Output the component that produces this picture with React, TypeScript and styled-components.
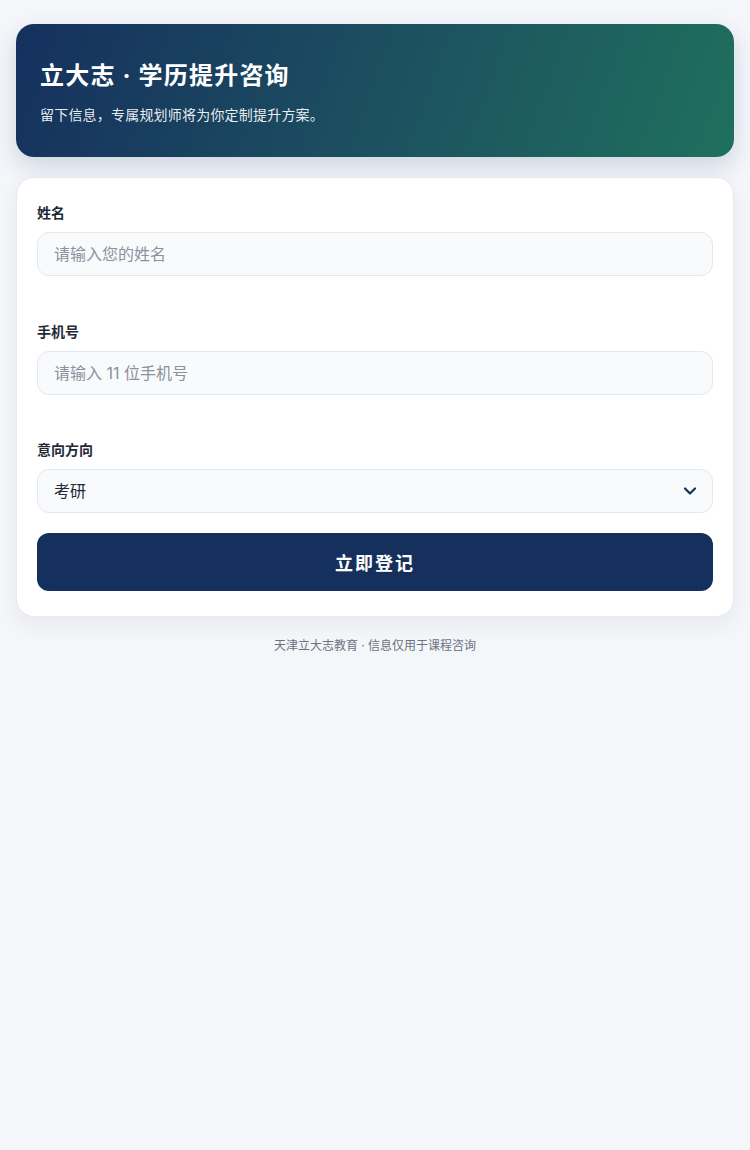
import { useState } from "react";
import styled, { createGlobalStyle } from "styled-components";

const GlobalStyle = createGlobalStyle`
  * {
    box-sizing: border-box;
  }
  body {
    margin: 0;
    background: #f4f6fa;
    font-family: Inter, "Noto Sans CJK SC", sans-serif;
    color: #1f2937;
  }
`;

const Page = styled.div`
  padding: 24px 16px 40px;
  display: flex;
  flex-direction: column;
  gap: 20px;
`;

const Hero = styled.header`
  border-radius: 18px;
  padding: 35px 24px 32px;
  background: linear-gradient(110deg, #15305e 0%, #1c4f60 50%, #1f705d 100%);
  color: #ffffff;
  box-shadow: 0 10px 24px rgba(21, 48, 94, 0.16);
`;

const Title = styled.h1`
  margin: 0 0 11px;
  font-size: 24px;
  line-height: 34px;
  font-weight: 700;
  letter-spacing: 1.2px;
`;

const Subtitle = styled.p`
  margin: 0;
  font-size: 14px;
  line-height: 21px;
  letter-spacing: 0.2px;
  color: rgba(255, 255, 255, 0.92);
`;

const Card = styled.form`
  background: #ffffff;
  border: 1px solid #e5e9f0;
  border-radius: 18px;
  padding: 25px 20px 25px;
  box-shadow: 0 8px 22px rgba(30, 41, 59, 0.06);
  display: flex;
  flex-direction: column;
`;

const Field = styled.div<{ $space: number }>`
  display: flex;
  flex-direction: column;
  gap: 9px;
  margin-bottom: ${(p) => p.$space}px;
`;

const Label = styled.label`
  font-size: 14px;
  line-height: 20px;
  font-weight: 700;
  color: #1f2937;
`;

const Input = styled.input`
  height: 44px;
  width: 100%;
  border: 1px solid #e2e8f0;
  border-radius: 12px;
  background: #f8fafc;
  padding: 0 16px;
  font-family: inherit;
  font-size: 16px;
  color: #1f2937;
  outline: none;

  &::placeholder {
    color: #8b929c;
  }
`;

const SelectWrap = styled.div`
  position: relative;
`;

const Select = styled.select`
  appearance: none;
  height: 44px;
  width: 100%;
  border: 1px solid #e2e8f0;
  border-radius: 12px;
  background: #f8fafc;
  padding: 0 40px 0 16px;
  font-family: inherit;
  font-size: 16px;
  color: #1f2937;
  outline: none;
`;

const Chevron = styled.svg`
  position: absolute;
  right: 16px;
  top: 50%;
  transform: translateY(-50%);
  pointer-events: none;
`;

const Submit = styled.button`
  height: 58px;
  border: none;
  border-radius: 12px;
  background: #15305c;
  color: #ffffff;
  font-family: inherit;
  font-size: 18px;
  font-weight: 700;
  letter-spacing: 2px;
  cursor: pointer;
`;

const Footer = styled.p`
  margin: 0;
  text-align: center;
  font-size: 12px;
  line-height: 18px;
  color: #6b7280;
`;

function App() {
  const [name, setName] = useState("");
  const [phone, setPhone] = useState("");
  const [track, setTrack] = useState("考研");

  return (
    <>
      <GlobalStyle />
      <Page>
        <Hero>
          <Title>立大志 · 学历提升咨询</Title>
          <Subtitle>留下信息，专属规划师将为你定制提升方案。</Subtitle>
        </Hero>

        <Card onSubmit={(e) => e.preventDefault()}>
          <Field $space={46}>
            <Label>姓名</Label>
            <Input
              placeholder="请输入您的姓名"
              value={name}
              onChange={(e) => setName(e.target.value)}
            />
          </Field>
          <Field $space={45}>
            <Label>手机号</Label>
            <Input
              type="tel"
              placeholder="请输入 11 位手机号"
              value={phone}
              onChange={(e) => setPhone(e.target.value)}
            />
          </Field>
          <Field $space={20}>
            <Label>意向方向</Label>
            <SelectWrap>
              <Select value={track} onChange={(e) => setTrack(e.target.value)}>
                <option>考研</option>
                <option>专升本</option>
                <option>成人高考</option>
                <option>自考</option>
              </Select>
              <Chevron width="14" height="14" viewBox="0 0 14 14">
                <polyline
                  points="2,4.5 7,9.5 12,4.5"
                  fill="none"
                  stroke="#15305c"
                  strokeWidth="2.2"
                  strokeLinecap="round"
                  strokeLinejoin="round"
                />
              </Chevron>
            </SelectWrap>
          </Field>
          <Submit type="submit">立即登记</Submit>
        </Card>

        <Footer>天津立大志教育 · 信息仅用于课程咨询</Footer>
      </Page>
    </>
  );
}

export default App;
